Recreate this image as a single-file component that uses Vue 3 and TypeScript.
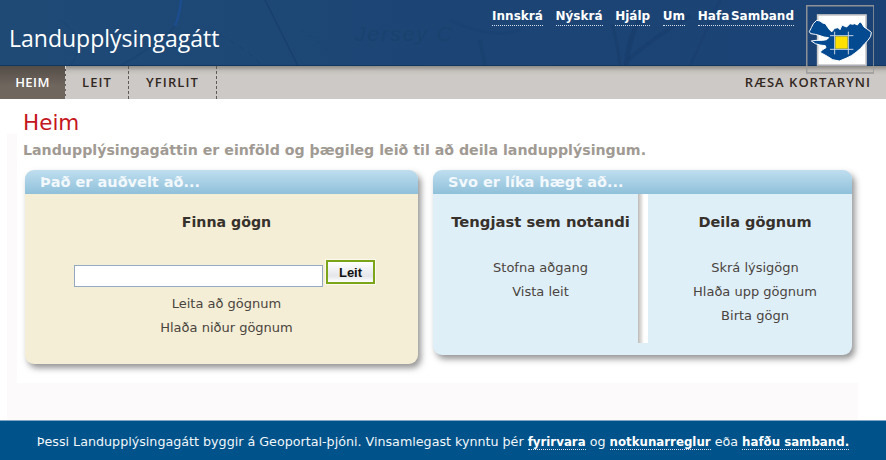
<template>
  <div class="page">
    <header class="banner">
      <svg class="map-lines" width="886" height="66" viewBox="0 0 886 66" aria-hidden="true">
        <g fill="none" stroke="#143763" stroke-opacity=".5">
          <path d="M265 0 L298 66" stroke-width="1.5" />
          <path d="M181 0 Q180 14 175 26" stroke="#1b4f96" stroke-opacity=".8" stroke-width="2.5" />
          <path d="M175 26 Q165 40 120 66" stroke-opacity=".25" stroke-width="2" />
          <path d="M60 20 Q90 40 70 66" stroke-opacity=".3" />
          <path d="M210 30 Q250 50 262 66" stroke-opacity=".3" stroke-dasharray="6 5" />
          <path d="M300 30 Q320 40 330 55" stroke-opacity=".25" stroke-dasharray="5 5" />
          <path d="M640 18 Q628 40 626 66" stroke-width="5" stroke-opacity=".35" />
          <path d="M690 16 Q650 40 628 60" stroke-width="4" stroke-opacity=".3" />
          <path d="M612 24 Q618 45 620 66" stroke-width="3" stroke-opacity=".3" />
          <path d="M720 0 L690 66" stroke-width="3" stroke-opacity=".18" />
          <path d="M480 40 L485 66" stroke-width="4" stroke-opacity=".2" />
          <path d="M450 20 Q490 40 520 30" stroke-width="3" stroke-opacity=".15" />
        </g>
        <text x="355" y="41" class="map-label">Jersey C</text>
      </svg>
      <h1 class="brand">Landupplýsingagátt</h1>
      <nav class="top-links">
        <a v-for="l in topLinks" :key="l">{{ l }}</a>
      </nav>
    </header>

    <svg class="logo" width="68" height="69" viewBox="50 16 204 207" aria-hidden="true">
      <rect x="85" y="46" width="145" height="150" fill="#fff" stroke="#c9c9c9" stroke-width="5" />
      <path
        d="M60 96 L66 84 L72 72 L82 62 L92 64 L100 70 L108 72 L116 84 L122 92 L128 96 L136 86 L146 84 L152 90 L158 76 L166 80 L172 82 L182 72 L190 74 L196 72 L204 76 L212 66 L218 72 L224 82 L236 90 L246 98 L244 110 L236 122 L226 132 L214 146 L200 158 L186 168 L170 176 L150 184 L130 180 L114 170 L100 162 L92 158 L100 150 L110 144 L108 138 L92 136 L78 132 L66 124 L80 122 L100 122 L112 120 L118 114 L104 112 L92 108 L78 104 L64 102 Z"
        fill="#044a90"
        stroke="#fff"
        stroke-width="3"
        stroke-linejoin="round"
      />
      <path d="M122 108 H192 M122 149 H192 M136 96 V164 M177 96 V164" stroke="#c7d3e2" stroke-width="3" />
      <rect x="138" y="110" width="37" height="37" fill="#ffe000" />
      <rect x="52" y="18" width="202" height="202" fill="none" stroke="#9a9a9a" stroke-width="5" stroke-opacity=".9" />
    </svg>

    <div class="tabs">
      <a class="tab active">HEIM</a>
      <a class="tab leit">LEIT</a>
      <a class="tab yfirlit">YFIRLIT</a>
      <a class="launch">RÆSA KORTARYNI</a>
    </div>

    <main class="shell">
      <div class="content">
        <h2 class="title">Heim</h2>
        <p class="lead">Landupplýsingagáttin er einföld og þægileg leið til að deila landupplýsingum.</p>

        <div class="panels">
          <section class="panel yellow">
            <h3 class="panel-head">Það er auðvelt að...</h3>
            <div class="panel-body single">
              <h4>Finna gögn</h4>
              <form class="search" @submit.prevent>
                <input class="search-input" type="text" />
                <button class="search-btn" type="submit">Leit</button>
              </form>
              <a class="link">Leita að gögnum</a>
              <a class="link">Hlaða niður gögnum</a>
            </div>
          </section>

          <section class="panel blue">
            <h3 class="panel-head">Svo er líka hægt að...</h3>
            <div class="panel-body split">
              <div class="col first">
                <h4>Tengjast sem notandi</h4>
                <a v-for="l in userLinks" :key="l" class="link">{{ l }}</a>
              </div>
              <div class="divider" />
              <div class="col">
                <h4>Deila gögnum</h4>
                <a v-for="l in shareLinks" :key="l" class="link">{{ l }}</a>
              </div>
            </div>
          </section>
        </div>
      </div>
    </main>

    <footer class="foot">
      Þessi Landupplýsingagátt byggir á Geoportal-þjóni. Vinsamlegast kynntu þér
      <a>fyrirvara</a> og <a>notkunarreglur</a> eða <a>hafðu samband.</a>
    </footer>
  </div>
</template>

<script setup lang="ts">
const topLinks: string[] = ['Innskrá', 'Nýskrá', 'Hjálp', 'Um', 'Hafa Samband']
const userLinks: string[] = ['Stofna aðgang', 'Vista leit']
const shareLinks: string[] = ['Skrá lýsigögn', 'Hlaða upp gögnum', 'Birta gögn']
</script>

<style>
html, body { margin: 0; background: #fff; overflow: hidden; }
</style>

<style scoped>
.page {
  width: 886px;
  height: 460px;
  position: relative;
  display: flex;
  flex-direction: column;
  overflow: hidden;
  font-family: "DejaVu Sans", Verdana, sans-serif;
}

/* ── Banner ── */
.banner {
  height: 66px;
  flex: none;
  position: relative;
  box-sizing: border-box;
  background: linear-gradient(90deg, #1f4a76, #1c4575 50%, #1b4274);
  border-bottom: 1px solid #123761;
  display: flex;
  align-items: flex-start;
  justify-content: space-between;
  padding: 0 92px 0 9px;
}
.map-lines { position: absolute; left: 0; top: 0; }
.map-label { font: italic 21px "Liberation Sans", sans-serif; fill: #1a426f; letter-spacing: 2px; }
.brand {
  position: relative;
  margin: 22px 0 0;
  font: 400 23px/32px "Open Sans", sans-serif;
  color: #fff;
}
.top-links { position: relative; display: flex; gap: 12.7px; margin-top: 8px; }
.top-links a {
  font-weight: 700;
  font-size: 12px;
  line-height: 16px;
  padding-bottom: 1px;
  word-spacing: -2.5px;
  color: #fff;
  border-bottom: 1px dotted #d5dde8;
}
.logo { position: absolute; left: 806px; top: 5px; z-index: 2; }

/* ── Tabs ── */
.tabs {
  height: 33px;
  flex: none;
  display: flex;
  align-items: stretch;
  background: linear-gradient(#8f8b86 0, #c3c0bc 5px, #ccc9c6 9px);
  font: 600 13px/33px "Open Sans", sans-serif;
  letter-spacing: 1.1px;
  color: #33281f;
}
.tab { box-sizing: border-box; text-align: center; border-right: 1px dashed #5f5a55; }
.tab.active {
  width: 66px;
  color: #fff;
  letter-spacing: .4px;
  border-right: 1px dashed #cfcfcf;
  background: linear-gradient(#544d47, #6f665e 60%);
}
.tab.leit { width: 63px; }
.tab.yfirlit { width: 88px; }
.launch { margin-left: auto; padding-right: 15px; letter-spacing: 1px; }

/* ── Content ── */
.shell {
  flex: 1;
  margin: 0 28px 0 7px;
  background: linear-gradient(#fff 35px, #fcfafa 35px);
}
.content {
  box-sizing: border-box;
  background: #fff;
  margin-left: 10px;
  height: 284px;
  padding: 10px 0 0 6px;
}
.title { margin: 0; font: 400 21.5px/28px "DejaVu Sans", sans-serif; color: #c4161c; }
.lead { margin: 1px 0 8px; font-weight: 700; font-size: 14.2px; line-height: 24px; color: #a09a93; white-space: nowrap; }
.panels { display: flex; align-items: flex-start; gap: 15px; margin-left: 2px; }
.panel {
  border-radius: 9px;
  box-shadow: 3px 4px 6px rgba(60, 60, 60, .55);
  overflow: hidden;
}
.panel.yellow { width: 393px; height: 194px; background: #f4eed6; }
.panel.blue { width: 419px; height: 185px; background: #dfeff8; }
.panel-head {
  margin: 0;
  height: 24px;
  padding-left: 15px;
  font-weight: 700;
  font-size: 14.5px;
  line-height: 24px;
  color: #f2f8fc;
  background: linear-gradient(#bfdeef, #8fc0da);
}
.panel-body { color: #4a443e; }
.single, .col { display: flex; flex-direction: column; align-items: center; box-sizing: border-box; padding-left: 10px; }
h4 { margin: 18px 0 0; font-weight: 700; font-size: 14.5px; line-height: 20px; color: #37312c; white-space: nowrap; }
.single h4 { font-size: 14.2px; }
.first h4 { font-size: 14.8px; }
.link { font-size: 13px; line-height: 24px; }
.search { display: flex; align-items: flex-end; gap: 3px; margin: 28px 0 8px; align-self: flex-start; margin-left: 39px; }
.search-input {
  width: 249px;
  height: 22px;
  box-sizing: border-box;
  margin: 0 0 -3px;
  border: 1px solid #93a9c2;
  background: #fff;
  outline: none;
}
.search-btn {
  width: 49px;
  height: 24px;
  box-sizing: border-box;
  border: 2px solid #7da51a;
  box-shadow: 0 0 0 1px #fbf9ee;
  padding: 0;
  background: linear-gradient(#fff, #e4e6ea 70%, #fff);
  font: 700 13px "Liberation Sans", sans-serif;
  color: #111;
}
.split { display: flex; align-items: flex-start; }
.col { flex: 1; }
.col.first { width: 205px; flex: none; }
.col .link:first-of-type { margin-top: 24px; }
.divider {
  width: 10px;
  height: 149px;
  flex: none;
  background: linear-gradient(90deg, #bdb9b6, #fff 60%);
}

/* ── Footer ── */
.foot {
  flex: none;
  height: 40px;
  border-top: 1px solid #7fa6c4;
  box-sizing: border-box;
  background: #00538a;
  color: #f2f6fa;
  text-align: center;
  font-size: 12.7px;
  line-height: 42px;
  white-space: nowrap;
}
.foot a { font-size: 11.8px; font-weight: 700; color: #fff; border-bottom: 1px dotted #dde; }
</style>
